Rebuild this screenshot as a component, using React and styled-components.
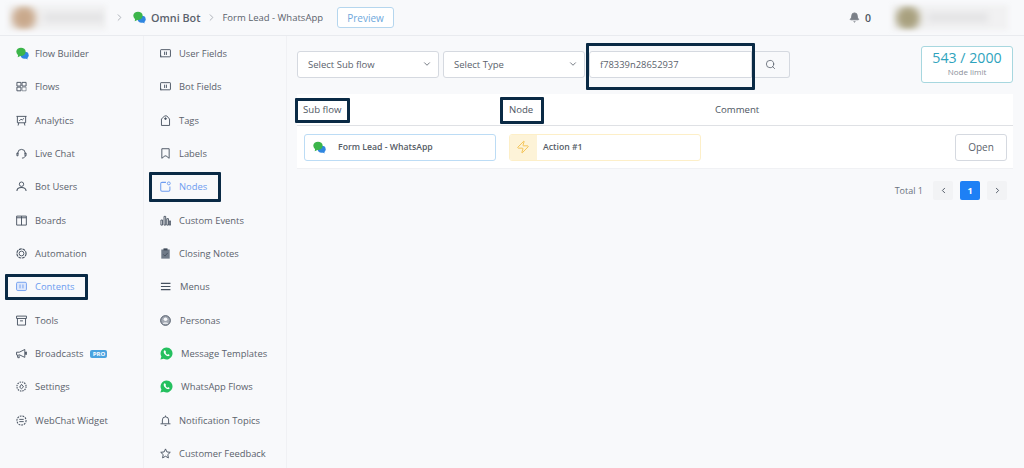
import React from "react";
import styled, { createGlobalStyle } from "styled-components";
import { Bell, ChevronDown, ChevronLeft, ChevronRight, Search, Zap } from "lucide-react";

const GlobalStyle = createGlobalStyle`
  html, body { margin: 0; padding: 0; background: #f8f9fb; }
  body { font-family: "Open Sans", "Noto Sans", sans-serif; color: #555c66; overflow: hidden; }
`;

const Page = styled.div`
  width: 1024px;
  height: 468px;
  display: flex;
  flex-direction: column;
  overflow: hidden;
`;

const TopBar = styled.header`
  height: 36px;
  box-sizing: border-box;
  flex: none;
  display: flex;
  align-items: center;
  border-bottom: 1px solid #e9ebef;
  background: #f8f9fb;
  padding: 0 16px 0 8px;
`;

const BlurredProfile = styled.div`
  width: ${(p) => p.$width}px;
  height: 25px;
  flex: none;
  display: flex;
  align-items: center;
  gap: 8px;
  background: #f1f1f2;
  filter: blur(2px);
  overflow: hidden;
`;

const BlurDot = styled.div`
  width: 24px;
  height: 24px;
  border-radius: 50%;
  flex: none;
  margin-left: 4px;
  background: ${(p) => p.$color};
  filter: blur(3px);
`;

const BlurLine = styled.div`
  height: 7px;
  width: 60px;
  background: #dfdfe1;
  filter: blur(3px);
`;

const Crumb = styled.span`
  font-size: ${(p) => p.$size || 11}px;
  font-weight: ${(p) => p.$weight || 400};
  color: #5b626c;
  white-space: nowrap;
`;

const CrumbArrow = styled(ChevronRight)`
  color: #a8adb5;
  flex: none;
  margin: ${(p) => p.$margin};
`;

const PreviewButton = styled.button`
  width: 57px;
  height: 21px;
  margin-left: 14px;
  padding: 0;
  background: #fff;
  border: 1px solid #b5d6ee;
  border-radius: 3px;
  color: #6ea8dc;
  font: 400 10px "Open Sans", sans-serif;
`;

const BellBox = styled.div`
  margin-left: auto;
  margin-right: 21px;
  display: flex;
  align-items: center;
  gap: 5px;
  font-size: 10.5px;
  font-weight: 600;
  color: #4d5562;
`;

const Body = styled.div`
  flex: 1;
  display: flex;
  min-height: 0;
`;

const Column = styled.nav`
  width: ${(p) => p.$width}px;
  flex: none;
  box-sizing: border-box;
  padding-top: 1px;
  border-right: 1px solid #f0f1f4;
`;

const NavItem = styled.div`
  position: relative;
  height: 33.33px;
  display: flex;
  align-items: center;
  padding-left: 16px;
  font-size: 9.4px;
  color: ${(p) => (p.$active ? "#6d9cf0" : "#5b626c")};
  white-space: nowrap;
`;

const IconSlot = styled.span`
  width: ${(p) => p.$width}px;
  flex: none;
  display: flex;
  align-items: center;
`;

const NavIcon = styled.svg.attrs({ viewBox: "0 0 12 12", fill: "none", stroke: "currentColor", strokeWidth: 1 })`
  width: 11px;
  height: 11px;
  color: ${(p) => (p.$active ? "#6d9cf0" : "#46515f")};
`;

const ProBadge = styled.span`
  margin-left: 7px;
  width: 17px;
  height: 8px;
  border-radius: 2px;
  background: #4aa3df;
  color: #fff;
  font-size: 6px;
  font-weight: 700;
  line-height: 8px;
  text-align: center;
`;

/* dark annotation frames that sit on top of the screenshot */
const Frame = styled.span`
  position: absolute;
  left: ${(p) => p.$l}px;
  top: ${(p) => p.$t}px;
  width: ${(p) => p.$w}px;
  height: ${(p) => p.$h}px;
  box-sizing: border-box;
  border: 3.5px solid #0a2a45;
  border-radius: 1px;
  pointer-events: none;
`;

const Main = styled.main`
  flex: 1;
  min-width: 0;
  padding: 10px 11px 0 10px;
`;

const FilterRow = styled.div`
  height: 36px;
  margin-bottom: 12px;
  display: flex;
  align-items: center;
`;

const SelectBox = styled.div`
  width: 142px;
  height: 27px;
  box-sizing: border-box;
  margin-right: 4px;
  padding: 0 6px 0 10px;
  display: flex;
  align-items: center;
  justify-content: space-between;
  background: #fff;
  border: 1px solid #d5d9e0;
  border-radius: 3px;
  font-size: 9.5px;
  color: #5b626c;
`;

const SearchWrap = styled.div`
  position: relative;
  width: 163px;
  height: 27px;
  box-sizing: border-box;
  padding-left: 10px;
  display: flex;
  align-items: center;
  background: #fff;
  border: 1px solid #d5d9e0;
  border-radius: 3px 0 0 3px;
  font-size: 9.4px;
  color: #5b626c;
`;

const SearchButton = styled.div`
  width: 38px;
  height: 27px;
  box-sizing: border-box;
  display: flex;
  align-items: center;
  justify-content: center;
  background: #f8f9fb;
  border: 1px solid #d5d9e0;
  border-left: 0;
  border-radius: 0 3px 3px 0;
  color: #4d5562;
`;

const LimitBox = styled.div`
  margin-left: auto;
  width: 92px;
  height: 37px;
  box-sizing: border-box;
  padding-bottom: 2px;
  display: flex;
  flex-direction: column;
  align-items: center;
  justify-content: center;
  background: #fff;
  border: 1px solid #a7d7df;
  border-radius: 3px;
`;

const LimitCount = styled.div`
  font-size: 14.2px;
  line-height: 16px;
  color: #2ea3bd;
`;

const LimitLabel = styled.div`
  font-size: 8px;
  line-height: 11px;
  color: #8b919a;
`;

const Table = styled.div`
  background: #fff;
`;

const HeadRow = styled.div`
  position: relative;
  height: 32px;
  box-sizing: border-box;
  display: flex;
  align-items: center;
  padding-left: 6px;
  border-bottom: 1px solid #dfe1e5;
  font-size: 9.6px;
  color: #4d5562;
`;

const HeadCell = styled.span`
  width: ${(p) => p.$width}px;
  flex: none;
`;

const BodyRow = styled.div`
  height: 43px;
  box-sizing: border-box;
  display: flex;
  align-items: center;
  padding: 0 6px 0 7px;
  border-bottom: 1px solid #f0f1f4;
`;

const LinkCard = styled.div`
  width: 192px;
  height: 27px;
  box-sizing: border-box;
  margin-right: 13px;
  display: flex;
  align-items: center;
  border: 1px solid ${(p) => p.$border};
  border-radius: 3px;
  overflow: hidden;
  font-size: 8.7px;
  font-weight: 600;
  color: #555c66;
`;

const CardIcon = styled.span`
  width: ${(p) => p.$width}px;
  height: 100%;
  flex: none;
  display: flex;
  align-items: center;
  margin-right: ${(p) => p.$gap || 0}px;
  padding-left: ${(p) => p.$pad}px;
  box-sizing: border-box;
  background: ${(p) => p.$bg || "transparent"};
  color: #f3c14f;
`;

const OpenButton = styled.button`
  margin-left: auto;
  width: 52px;
  height: 27px;
  padding: 0;
  background: #fff;
  border: 1px solid #d5d9e0;
  border-radius: 3px;
  color: #5b626c;
  font: 400 10px "Open Sans", sans-serif;
`;

const Pager = styled.div`
  height: 43px;
  display: flex;
  align-items: center;
  justify-content: flex-end;
  padding-right: 6px;
  gap: 7px;
  font-size: 9px;
  color: #6b7280;
`;

const PageTotal = styled.span`
  margin-right: 3px;
`;

const PageBtn = styled.span`
  width: 20px;
  height: 19px;
  display: flex;
  align-items: center;
  justify-content: center;
  border-radius: 2px;
  font-weight: 700;
  background: ${(p) => (p.$active ? "#1e80f5" : "#f2f3f5")};
  color: ${(p) => (p.$active ? "#fff" : "#4d5562")};
`;

const ChatLogo = ({ size = 13 }) => (
  <svg width={size} height={size} viewBox="0 0 12 12">
    <ellipse cx="8" cy="7.6" rx="3.7" ry="3.2" fill="#2f86e0" />
    <path d="M8 10l2.8 1.6-.6-2.6z" fill="#2f86e0" />
    <ellipse cx="4.6" cy="4.4" rx="4.3" ry="3.8" fill="#3cb54a" />
    <path d="M2 7l-.4 2.4L4.6 8z" fill="#3cb54a" />
  </svg>
);

const WhatsApp = () => (
  <svg width="13" height="13" viewBox="0 0 13 13">
    <path d="M6.6.4a6 6 0 0 0-5.2 9L.4 12.6l3.3-.9A6 6 0 1 0 6.6.4z" fill="#25c05f" />
    <path d="M4.6 3.3c-.4.2-.9.8-.9 1.5 0 1.8 2.4 4.3 4.5 4.4.8 0 1.4-.6 1.5-1.1 0-.3-1.3-1-1.6-.9l-.6.6c-.7-.2-1.7-1.2-2-2l.5-.6c.1-.3-.5-1.8-1.4-1.9z" fill="#fff" />
  </svg>
);

const FlowsIcon = () => (
  <NavIcon stroke="none" fill="currentColor">
    <path d="M1 1.5h4.4v4H1zM6.6 1.5H11v4H6.6zM1 6.7h4.4v4H1z" />
    <path d="M6.6 6.7H11v4H6.6z" opacity=".6" />
  </NavIcon>
);
const AnalyticsIcon = () => (
  <NavIcon>
    <path d="M.5 1.5h11M1.5 1.5v7h9v-7M3 8.5l-.7 3M9 8.5l.7 3M3.5 6.5l2-2 1.3 1L8.8 3.5" />
  </NavIcon>
);
const HeadsetIcon = () => (
  <NavIcon>
    <path d="M2 6.5V5.5a4 4 0 0 1 8 0v1M10 8.5c0 1.7-1.5 2.5-3.5 2.5" />
    <path d="M1 5.5h1.2v3H1zM9.8 5.5H11v3H9.8z" />
  </NavIcon>
);
const UserIcon = () => (
  <NavIcon>
    <circle cx="6" cy="3.5" r="2.4" />
    <path d="M1 11c0-2.6 2-3.8 5-3.8s5 1.2 5 3.8" strokeWidth="1.1" />
  </NavIcon>
);
const BoardsIcon = () => (
  <NavIcon stroke="#66707e">
    <path d="M.7 1.2h10.6v9.8H.7zM6 1.2V11M.7 3h10.6" />
  </NavIcon>
);
const AutomationIcon = () => (
  <NavIcon>
    <circle cx="6" cy="6" r="5" strokeWidth="1.2" strokeDasharray="3.2 .8" />
    <circle cx="6" cy="6" r="2.6" />
  </NavIcon>
);
const ContentsIcon = () => (
  <NavIcon $active>
    <rect x=".6" y="1.4" width="10.8" height="9" rx="1.4" fill="#dfe8fb" />
    <path d="M4.4 3.8v4.2M7.6 3.8v4.2" />
  </NavIcon>
);
const ToolsIcon = () => (
  <NavIcon>
    <path d="M.6 1.2h10.8v2.6H.6zM1.6 3.8V11h8.8V3.8M4.4 6.4h3.2" />
  </NavIcon>
);
const MegaphoneIcon = () => (
  <NavIcon stroke="none" fill="#6f7783">
    <path d="M.6 4.6h3L9.6 1.6v8.6L3.6 7.4H3l.6 3.2H2L1.4 7.4H.6z" />
    <path d="M10.4 4.4h1.2v2.6h-1.2z" />
  </NavIcon>
);
const SettingsIcon = () => (
  <NavIcon>
    <circle cx="6" cy="6" r="5" strokeWidth="1.2" strokeDasharray="1.6 1" />
    <path d="M4 6.8 6 3.6l2.2 2.8L6 8.4z" />
  </NavIcon>
);
const WidgetIcon = () => (
  <NavIcon>
    <circle cx="6" cy="6" r="5" strokeWidth="1.1" strokeDasharray="2 1" />
    <path d="M3.6 4.8h4.8M3.6 7.2h4.8" />
  </NavIcon>
);
const FieldIcon = () => (
  <NavIcon>
    <rect x=".6" y="1.8" width="10.8" height="7.8" rx=".6" />
    <path d="M.8 7.8v2.4M5 4v3.6M7 4v3.6" />
  </NavIcon>
);
const TagIcon = () => (
  <NavIcon>
    <path d="M1.6 4.4 5 1h2.4l3 3.4V11.4H1.6z" />
    <circle cx="6" cy="4" r=".9" fill="currentColor" />
  </NavIcon>
);
const LabelIcon = () => (
  <NavIcon stroke="#66707e">
    <path d="M2 .8h8v10.4L6.6 8.6 5.4 8.6 2 11.2z" />
  </NavIcon>
);
const NodeIcon = () => (
  <NavIcon $active>
    <path d="M6.5 1.5H2.2A1.4 1.4 0 0 0 .8 2.9v6.8a1.4 1.4 0 0 0 1.4 1.4h7.2a1.4 1.4 0 0 0 1.4-1.4V6" strokeWidth="1.1" />
    <circle cx="9.6" cy="2.6" r="1.6" />
  </NavIcon>
);
const EventsIcon = () => (
  <NavIcon stroke="none" fill="#56606e">
    <path d="M1 5.5h1.8v5.5H1zM4.4 1.5h1.8V11H4.4zM7.4 4h1.8v7H7.4zM10.2 6.5H11.6V11h-1.4z" />
  </NavIcon>
);
const NotesIcon = () => (
  <NavIcon stroke="#fff">
    <path d="M1.4 1.6h9.2v10H1.4z" fill="#6f7a88" stroke="none" />
    <path d="M3.8.4h4.4v2.2H3.8z" fill="#3f4a58" stroke="none" />
    <path d="M3.6 7l1.8 1.8 3-3.4" />
  </NavIcon>
);
const MenuIcon = () => (
  <NavIcon>
    <path d="M1 2.6h10.4M1 6h10.4M1 9.4h10.4" strokeWidth="1.2" />
  </NavIcon>
);
const PersonaIcon = () => (
  <NavIcon>
    <circle cx="6" cy="6" r="5.3" fill="#a3a9b3" />
    <circle cx="6" cy="4.6" r="2" fill="#f8f9fb" stroke="none" />
    <path d="M2.8 9.6c.4-1.8 5.8-1.8 6.4 0z" fill="#f8f9fb" stroke="none" />
  </NavIcon>
);
const BellIcon = () => (
  <NavIcon>
    <path d="M2.6 9.4V5.4a3.4 3.4 0 0 1 6.8 0v4M.6 9.6h10.8M6 .6v1.4M5 11.4h2" />
  </NavIcon>
);
const StarIcon = () => (
  <NavIcon>
    <path d="M6 1l1.5 3.3 3.7.4-2.7 2.5.7 3.6L6 9l-3.2 1.8.7-3.6L.8 4.7l3.7-.4z" />
  </NavIcon>
);

const mainNav = [
  { label: "Flow Builder", icon: <ChatLogo /> },
  { label: "Flows", icon: <FlowsIcon /> },
  { label: "Analytics", icon: <AnalyticsIcon /> },
  { label: "Live Chat", icon: <HeadsetIcon /> },
  { label: "Bot Users", icon: <UserIcon /> },
  { label: "Boards", icon: <BoardsIcon /> },
  { label: "Automation", icon: <AutomationIcon /> },
  { label: "Contents", icon: <ContentsIcon />, active: true, frame: { $l: 5, $t: 4, $w: 83, $h: 26 } },
  { label: "Tools", icon: <ToolsIcon /> },
  { label: "Broadcasts", icon: <MegaphoneIcon />, pro: true },
  { label: "Settings", icon: <SettingsIcon /> },
  { label: "WebChat Widget", icon: <WidgetIcon /> },
];

const subNav = [
  { label: "User Fields", icon: <FieldIcon /> },
  { label: "Bot Fields", icon: <FieldIcon /> },
  { label: "Tags", icon: <TagIcon /> },
  { label: "Labels", icon: <LabelIcon /> },
  { label: "Nodes", icon: <NodeIcon />, active: true, frame: { $l: 5, $t: 2, $w: 72, $h: 30 } },
  { label: "Custom Events", icon: <EventsIcon /> },
  { label: "Closing Notes", icon: <NotesIcon /> },
  { label: "Menus", icon: <MenuIcon />, width: 20 },
  { label: "Personas", icon: <PersonaIcon />, width: 20 },
  { label: "Message Templates", icon: <WhatsApp />, width: 21 },
  { label: "WhatsApp Flows", icon: <WhatsApp />, width: 21 },
  { label: "Notification Topics", icon: <BellIcon /> },
  { label: "Customer Feedback", icon: <StarIcon /> },
];

const App = () => (
  <Page>
    <GlobalStyle />
    <TopBar>
      <BlurredProfile $width={98}>
        <BlurDot $color="#c9a98c" />
        <BlurLine />
      </BlurredProfile>
      <CrumbArrow size={11} $margin="0 8px 0 8px" />
      <IconSlot $width={18}><ChatLogo /></IconSlot>
      <Crumb $size={10.8} $weight={600}>Omni Bot</Crumb>
      <CrumbArrow size={11} $margin="0 5px 0 6px" />
      <Crumb $size={9.5}>Form Lead - WhatsApp</Crumb>
      <PreviewButton>Preview</PreviewButton>
      <BellBox>
        <Bell size={11} fill="#7b8088" color="#7b8088" />
        0
      </BellBox>
      <BlurredProfile $width={116}>
        <BlurDot $color="#a8a07e" />
        <BlurLine />
      </BlurredProfile>
    </TopBar>
    <Body>
      <Column $width={144}>
        {mainNav.map((item) => (
          <NavItem key={item.label} $active={item.active}>
            <IconSlot $width={19}>{item.icon}</IconSlot>
            {item.label}
            {item.pro && <ProBadge>PRO</ProBadge>}
            {item.frame && <Frame {...item.frame} />}
          </NavItem>
        ))}
      </Column>
      <Column $width={143}>
        {subNav.map((item) => (
          <NavItem key={item.label} $active={item.active}>
            <IconSlot $width={item.width || 19}>{item.icon}</IconSlot>
            {item.label}
            {item.frame && <Frame {...item.frame} />}
          </NavItem>
        ))}
      </Column>
      <Main>
        <FilterRow>
          <SelectBox>Select Sub flow<ChevronDown size={10} /></SelectBox>
          <SelectBox>Select Type<ChevronDown size={10} /></SelectBox>
          <SearchWrap>
            f78339n28652937
            <Frame $l={-4} $t={-9} $w={169} $h={47} />
          </SearchWrap>
          <SearchButton><Search size={11} strokeWidth={1.6} /></SearchButton>
          <LimitBox>
            <LimitCount>543 / 2000</LimitCount>
            <LimitLabel>Node limit</LimitLabel>
          </LimitBox>
        </FilterRow>
        <Table>
          <HeadRow>
            <HeadCell $width={206}>
              Sub flow
              <Frame $l={-2} $t={4} $w={55} $h={25} />
            </HeadCell>
            <HeadCell $width={206}>
              Node
              <Frame $l={203} $t={3} $w={44} $h={27} />
            </HeadCell>
            <HeadCell>Comment</HeadCell>
          </HeadRow>
          <BodyRow>
            <LinkCard $border="#bcdcf5">
              <CardIcon $width={33} $pad={8}><ChatLogo /></CardIcon>
              Form Lead - WhatsApp
            </LinkCard>
            <LinkCard $border="#fdefc8">
              <CardIcon $width={27} $pad={6} $gap={6} $bg="#fdf3d8"><Zap size={14} strokeWidth={1.6} /></CardIcon>
              Action #1
            </LinkCard>
            <OpenButton>Open</OpenButton>
          </BodyRow>
        </Table>
        <Pager>
          <PageTotal>Total 1</PageTotal>
          <PageBtn><ChevronLeft size={9} strokeWidth={2.5} /></PageBtn>
          <PageBtn $active>1</PageBtn>
          <PageBtn><ChevronRight size={9} strokeWidth={2.5} /></PageBtn>
        </Pager>
      </Main>
    </Body>
  </Page>
);

export default App;
